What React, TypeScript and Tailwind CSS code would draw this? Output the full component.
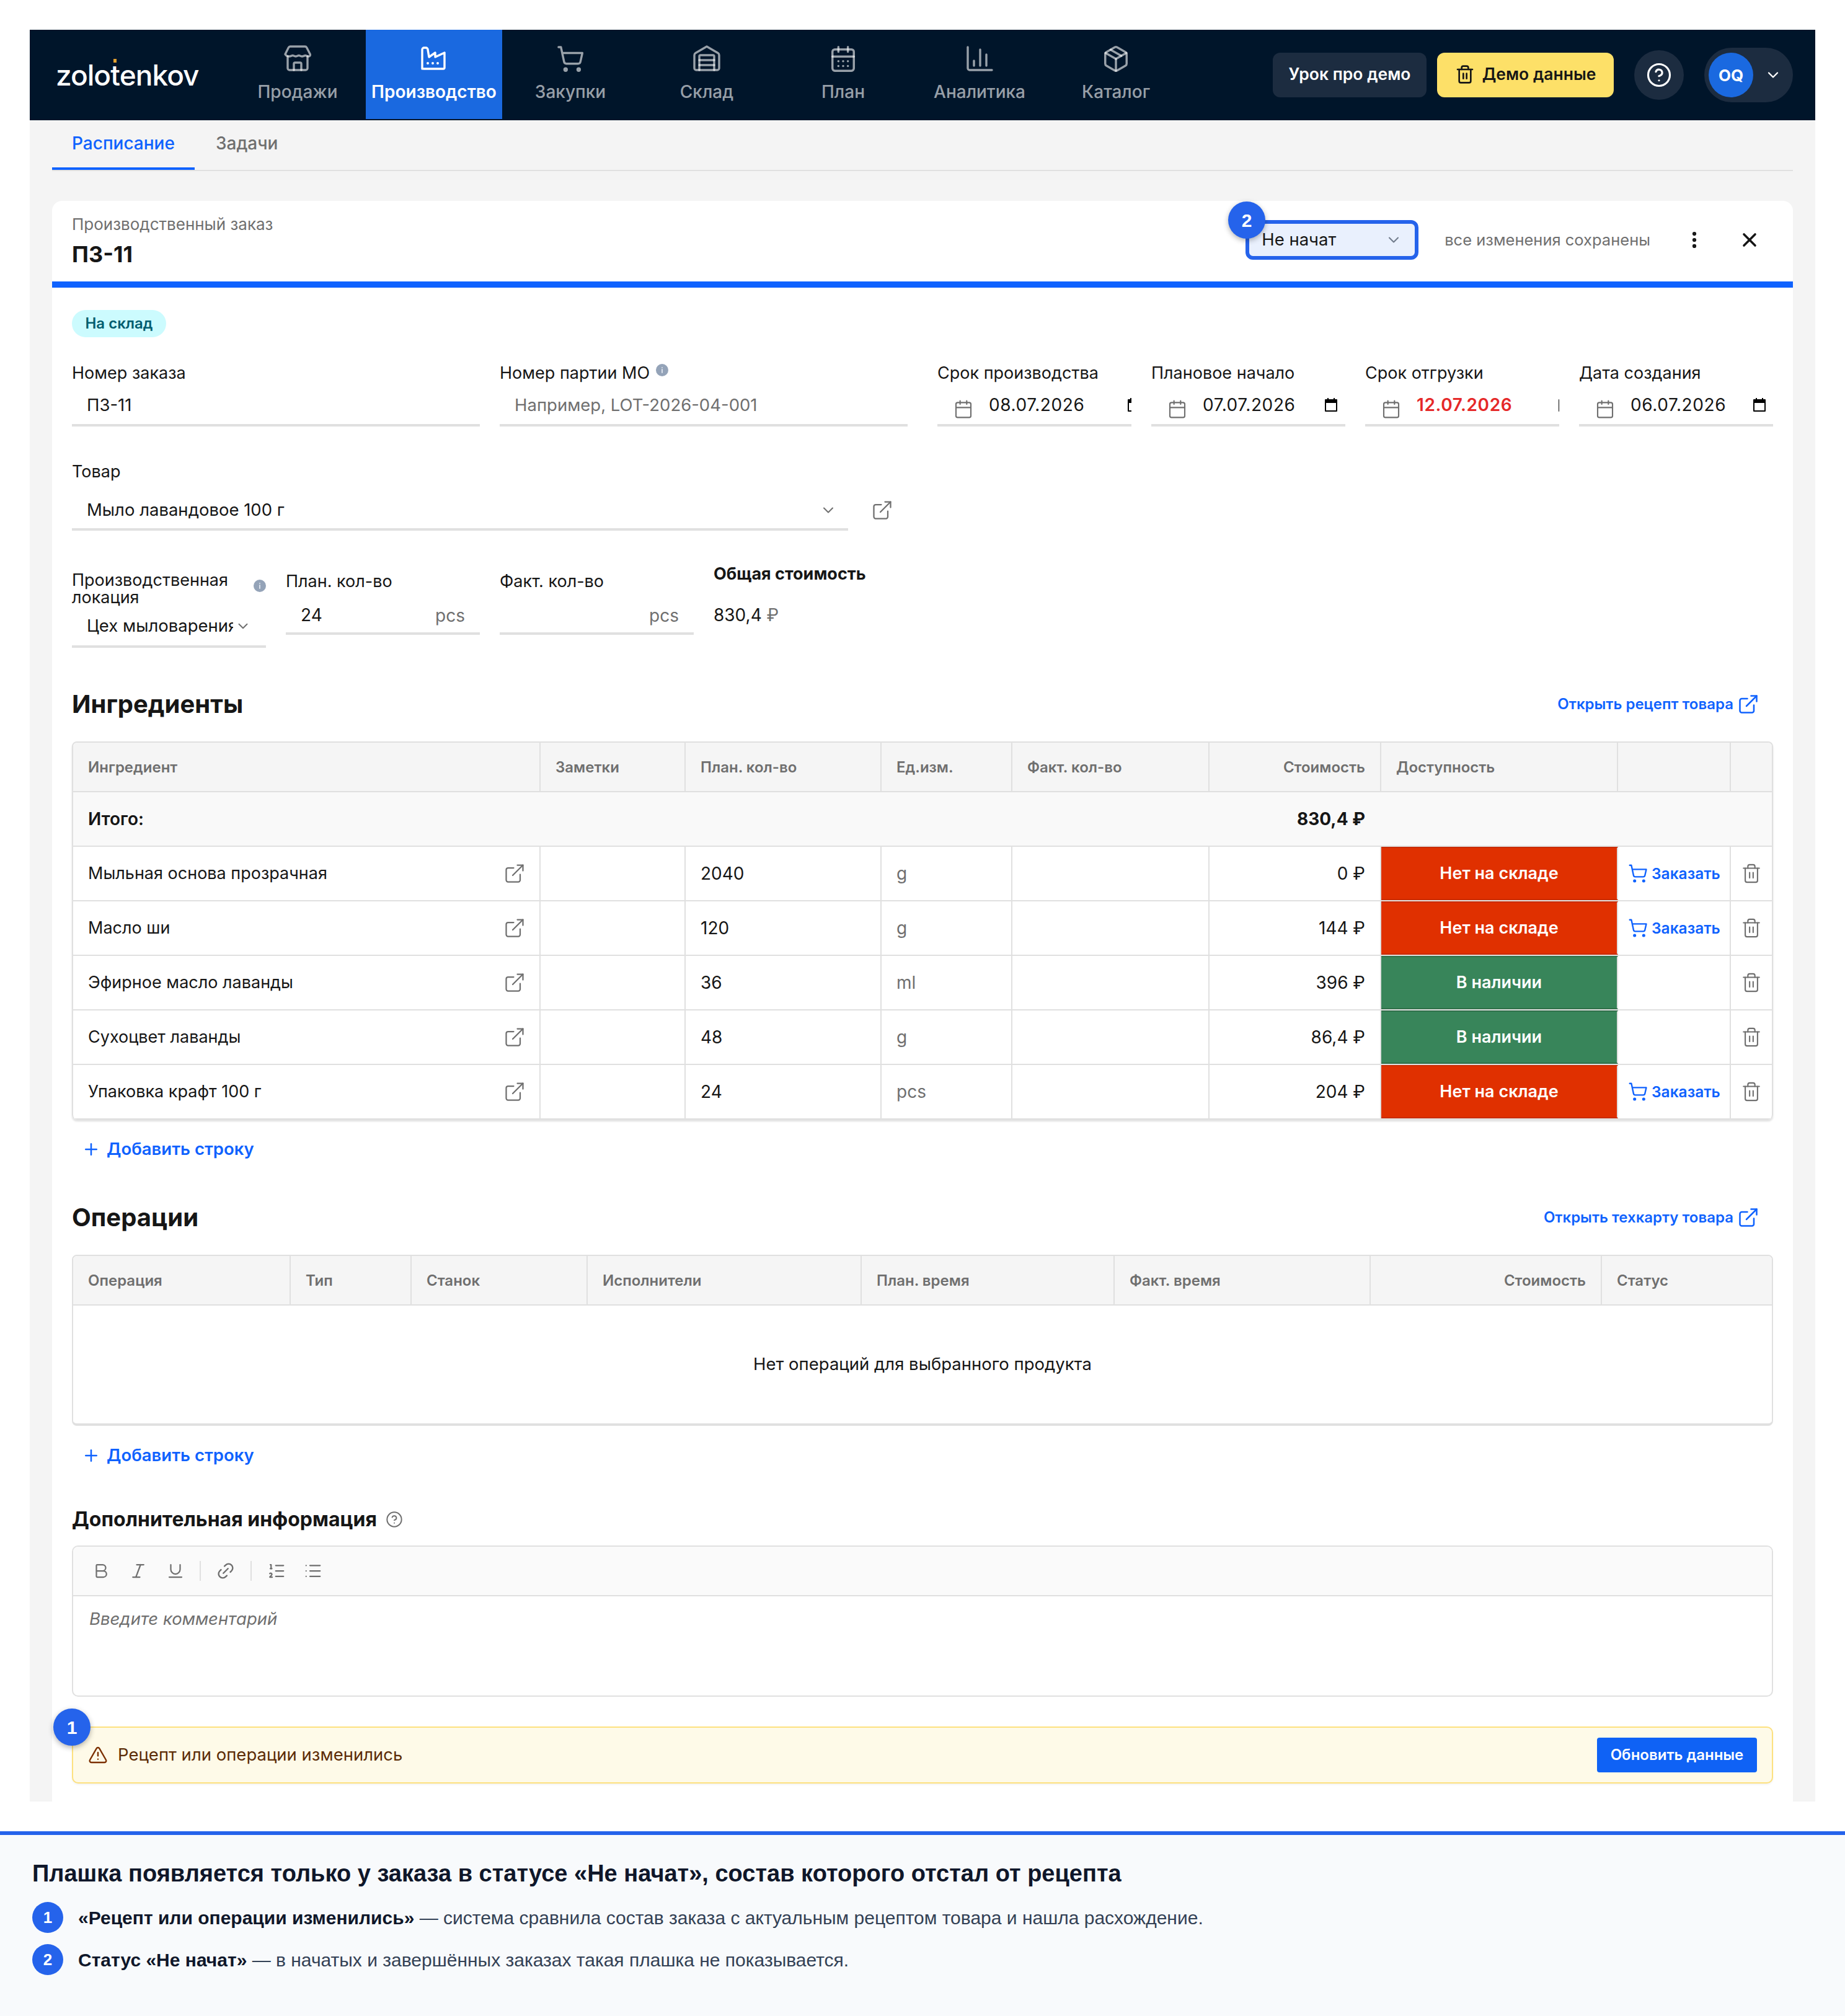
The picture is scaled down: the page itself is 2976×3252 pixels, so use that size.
import {
  Bold,
  CalendarDays,
  Calendar,
  ChevronDown,
  CircleHelp,
  EllipsisVertical,
  ExternalLink,
  Italic,
  Link2,
  List,
  ListOrdered,
  Package,
  Plus,
  ShoppingCart,
  Trash2,
  TriangleAlert,
  Underline,
  X,
} from "lucide-react";

const StoreIcon = () => (
  <svg viewBox="0 0 44 44" className="w-[44px] h-[44px]" fill="none" stroke="currentColor" strokeWidth="3.4" strokeLinejoin="round" strokeLinecap="round">
    <path d="M10 2h24a3 3 0 0 1 2.6 1.5L42 14c1 2.5-.5 4-2.5 4-2.500 0-3.500-1.500-5-1.500S31.500 18 29 18s-3.500-1.500-5-1.500S21.500 18 19 18s-3.500-1.500-5-1.500S11 18 8.500 18 4 18 2 14.500L7.500 3.500A3 3 0 0 1 10 2z" />
    <path d="M6 18v19a3 3 0 0 0 3 3h26a3 3 0 0 0 3-3V18" />
    <path d="M16 40V30a2 2 0 0 1 2-2h8a2 2 0 0 1 2 2v10" />
  </svg>
);

const FactoryIcon = () => (
  <svg viewBox="0 0 44 44" className="w-[44px] h-[44px]" fill="none" stroke="currentColor" strokeWidth="3.4" strokeLinejoin="round" strokeLinecap="round">
    <path d="M3 38V7a3 3 0 0 1 3-3h3a3 3 0 0 1 3 3l2 12 10-7v7l15-7v24a2 2 0 0 1-2 2H5a2 2 0 0 1-2-2z" />
    <path d="M12 29h.01M20 29h.01M28 29h.01" strokeWidth="4" />
  </svg>
);

const WarehouseIcon = () => (
  <svg viewBox="0 0 44 44" className="w-[44px] h-[44px]" fill="none" stroke="currentColor" strokeWidth="3.400" strokeLinejoin="round" strokeLinecap="round">
    <path d="M2 37V16a4 4 0 0 1 2-3.500L22 2l18 10.500a4 4 0 0 1 2 3.500v21a3 3 0 0 1-3 3H5a3 3 0 0 1-3-3z" />
    <path d="M10 40V18a2 2 0 0 1 2-2h20a2 2 0 0 1 2 2v22" />
    <path d="M10 24h24M10 32h24" />
  </svg>
);

const ChartIcon = () => (
  <svg viewBox="0 0 44 44" className="w-[44px] h-[44px]" fill="none" stroke="currentColor" strokeWidth="3.400" strokeLinejoin="round" strokeLinecap="round">
    <path d="M3 3v34a3 3 0 0 0 3 3h36" />
    <path d="M13 25v8M23 7v26M33 15v18" />
  </svg>
);

const navItems = [
  { label: "Продажи", icon: <StoreIcon /> },
  { label: "Производство", icon: <FactoryIcon />, active: true },
  { label: "Закупки", icon: <ShoppingCart className="w-[46px] h-[46px]" strokeWidth={1.8} /> },
  { label: "Склад", icon: <WarehouseIcon /> },
  { label: "План", icon: <CalendarDays className="w-[46px] h-[46px]" strokeWidth={1.8} /> },
  { label: "Аналитика", icon: <ChartIcon /> },
  { label: "Каталог", icon: <Package className="w-[46px] h-[46px]" strokeWidth={1.8} /> },
];

const Badge = ({ n, className }: { n: number; className?: string }) => (
  <span className={`flex items-center justify-center rounded-full bg-[#2563eb] text-white font-bold font-['Liberation_Sans',sans-serif] ${className}`}>{n}</span>
);

const InfoDot = ({ className }: { className?: string }) => (
  <svg viewBox="0 0 20 20" className={`w-[20px] h-[20px] ${className}`}>
    <circle cx="10" cy="10" r="10" fill="#94a3b8" />
    <path d="M10 9v5M10 6h.01" stroke="#dbe2ec" strokeWidth="2" strokeLinecap="round" />
  </svg>
);

const PickerIcon = () => (
  <svg viewBox="0 0 24 24" className="w-[24px] h-[24px] shrink-0">
    <path d="M3 3h3V1h2v2h8V1h2v2h3a1 1 0 0 1 1 1v18a1 1 0 0 1-1 1H3a1 1 0 0 1-1-1V4a1 1 0 0 1 1-1zm1 6v12h16V9z" fill="#000" />
  </svg>
);

const Field = ({ label, value, placeholder, info, className }: { label: string; value?: string; placeholder?: string; info?: boolean; className: string }) => (
  <div className={className}>
    <div className="h-[36px] flex items-center text-[27px] leading-[36px] text-[#161616]">
      {label}
      {info && <InfoDot className="ml-[10px] -mt-[10px]" />}
    </div>
    <div className={`mt-[1px] h-[67px] border-b-4 border-[#e0e0e0] pl-[24px] pt-[2px] flex items-center text-[27.500px] ${placeholder ? "text-[#6f6f6f]" : "text-[#161616]"}`}>
      {value || placeholder}
    </div>
  </div>
);

const dateFields = [
  { label: "Срок производства", value: "08.07.2026", gap: "w-[222px]", color: "text-[#161616]" },
  { label: "Плановое начало", value: "07.07.2026", gap: "w-[195px]", color: "text-[#161616]" },
  { label: "Срок отгрузки", value: "12.07.2026", gap: "w-[227px]", color: "text-[#e52828] font-semibold" },
  { label: "Дата создания", value: "06.07.2026", gap: "w-[196px]", color: "text-[#161616]" },
];

const DateField = ({ label, value, gap, color }: { label: string; value: string; gap: string; color: string }) => (
  <div className="w-[313px]">
    <div className="h-[36px] flex items-center text-[27px] leading-[36px] text-[#161616]">{label}</div>
    <div className="mt-[1px] h-[67px] border-b-4 border-[#e0e0e0] pl-[26px] flex items-center overflow-hidden">
      <Calendar className="w-[32px] h-[32px] shrink-0 text-[#6f6f6f] mt-[14px]" strokeWidth={1.6} />
      <span className={`ml-[25px] ${gap} shrink-0 text-[28px] tracking-[0.6px] ${color}`}>{value}</span>
      <PickerIcon />
    </div>
  </div>
);

const Header = () => (
  <header className="h-[146px] bg-[#00152a] flex items-start">
    <div className="w-[322px] pl-[42px] h-[146px] flex items-center text-white text-[46px] font-medium tracking-[-1px]">
      <span>zolo</span>
      <span className="relative">
        t<span className="absolute left-[5px] top-[8px] w-[5px] h-[6px] bg-[#e0a030]" />
      </span>
      <span>enkov</span>
    </div>
    {navItems.map((item) => (
      <div
        key={item.label}
        className={`w-[220px] h-[144px] pt-[24px] flex flex-col items-center ${item.active ? "bg-[#1a69e0] text-white font-semibold" : "text-white/60 font-medium"}`}
      >
        <div className="h-[46px] flex items-center justify-center">{item.icon}</div>
        <div className="mt-[12px] text-[28px] leading-[36px]">{item.label}</div>
      </div>
    ))}
    <div className="ml-auto h-[146px] pr-[36px] flex items-center">
      <div className="h-[72px] w-[248px] rounded-[12px] bg-[#1c2c40] text-white text-[26.500px] font-semibold pb-[2px] flex items-center justify-center">Урок про демо</div>
      <div className="ml-[17px] h-[72px] w-[285px] rounded-[12px] bg-[#fde068] text-[#161616] text-[26.500px] font-semibold pb-[2px] flex items-center justify-center gap-[12px]">
        <Trash2 className="w-[32px] h-[32px]" strokeWidth={2} />
        Демо данные
      </div>
      <div className="ml-[33px] w-[80px] h-[80px] rounded-full bg-[#1c2c40] flex items-center justify-center text-white">
        <CircleHelp className="w-[42px] h-[42px]" strokeWidth={1.8} />
      </div>
      <div className="ml-[33px] w-[143px] h-[88px] rounded-full bg-[#1c2c40] pl-[7px] flex items-center">
        <div className="w-[72px] h-[72px] rounded-full bg-[#1a69e0] text-white text-[26px] font-bold flex items-center justify-center">OQ</div>
        <ChevronDown className="ml-[18px] w-[28px] h-[28px] text-white" strokeWidth={2} />
      </div>
    </div>
  </header>
);

const ingCols = "grid grid-cols-[754px_234px_316px_211px_318px_277px_382px_182px_1fr]";
const cell = "border-r-2 border-[#e0e0e0] flex items-center";

const rows = [
  { name: "Мыльная основа прозрачная", qty: "2040", unit: "g", cost: "0 ₽", ok: false },
  { name: "Масло ши", qty: "120", unit: "g", cost: "144 ₽", ok: false },
  { name: "Эфирное масло лаванды", qty: "36", unit: "ml", cost: "396 ₽", ok: true },
  { name: "Сухоцвет лаванды", qty: "48", unit: "g", cost: "86,4 ₽", ok: true },
  { name: "Упаковка крафт 100 г", qty: "24", unit: "pcs", cost: "204 ₽", ok: false },
];

const SectionHead = ({ title, link }: { title: string; link: string }) => (
  <div className="h-[48px] flex items-center justify-between">
    <h2 className="text-[40px] font-bold text-[#161616]">{title}</h2>
    <div className="mr-[22px] flex items-center gap-[6px] text-[24px] font-semibold text-[#0f62fe]">
      {link}
      <ExternalLink className="w-[36px] h-[36px]" strokeWidth={1.7} />
    </div>
  </div>
);

const AddRow = ({ className }: { className: string }) => (
  <div className={`h-[48px] pl-[16px] flex items-center gap-[10px] text-[27.500px] font-semibold text-[#0f62fe] ${className}`}>
    <Plus className="w-[30px] h-[30px]" strokeWidth={2} />
    Добавить строку
  </div>
);

const IngredientsTable = () => (
  <div className="mt-[36px] rounded-[8px] border-t-2 border-x-2 border-[#e0e0e0] shadow-[0_3px_3px_rgba(0,0,0,0.12)] overflow-hidden">
    <div className={`${ingCols} h-[80px] bg-[#f5f5f5] border-b-2 border-[#e0e0e0] text-[24px] font-semibold text-[#6f6f6f]`}>
      <div className={`${cell} pl-[24px] pt-[2px]`}>Ингредиент</div>
      <div className={`${cell} pl-[24px] pt-[2px]`}>Заметки</div>
      <div className={`${cell} pl-[24px] pt-[2px]`}>План. кол-во</div>
      <div className={`${cell} pl-[24px] pt-[2px]`}>Ед.изм.</div>
      <div className={`${cell} pl-[24px] pt-[2px]`}>Факт. кол-во</div>
      <div className={`${cell} justify-end pr-[24px] pt-[2px]`}>Стоимость</div>
      <div className={`${cell} pl-[24px] pt-[2px]`}>Доступность</div>
      <div className={cell} />
      <div />
    </div>
    <div className="h-[88px] bg-[#f9f9f9] border-b-2 border-[#e0e0e0] flex items-center justify-between text-[28px] font-semibold text-[#161616]">
      <span className="pl-[24px]">Итого:</span>
      <span className="mr-[656px] font-bold">830,4 ₽</span>
    </div>
    {rows.map((r) => (
      <div key={r.name} className={`${ingCols} h-[88px] border-b-2 border-[#e0e0e0] text-[28px] text-[#161616]`}>
        <div className={`${cell} pl-[24px] pr-[22px] justify-between`}>
          <span className="text-[27px]">{r.name}</span>
          <ExternalLink className="w-[36px] h-[36px] text-[#6f6f6f]" strokeWidth={1.5} />
        </div>
        <div className={cell} />
        <div className={`${cell} pl-[24px]`}>{r.qty}</div>
        <div className={`${cell} pl-[24px] text-[#6f6f6f]`}>{r.unit}</div>
        <div className={cell} />
        <div className={`${cell} justify-end pr-[24px]`}>{r.cost}</div>
        <div className={`${cell} justify-center text-white font-semibold text-[27px] border-y-2 ${r.ok ? "bg-[#38855a] border-y-[#2f7049]" : "bg-[#e03000] border-y-[#c92b00]"}`}>
          {r.ok ? "В наличии" : "Нет на складе"}
        </div>
        <div className={`${cell} pl-[16px] gap-[6px] text-[24.500px] font-semibold text-[#0f62fe]`}>
          {!r.ok && (
            <>
              <ShoppingCart className="w-[32px] h-[32px]" strokeWidth={1.8} />
              Заказать
            </>
          )}
        </div>
        <div className="flex items-center justify-center">
          <Trash2 className="w-[34px] h-[34px] text-[#6f6f6f]" strokeWidth={1.5} />
        </div>
      </div>
    ))}
  </div>
);

const OperationsTable = () => (
  <div className="mt-[36px] rounded-[8px] border-t-2 border-x-2 border-b-4 border-[#e0e0e0] overflow-hidden">
    <div className="grid grid-cols-[351px_195px_284px_442px_408px_413px_373px_1fr] h-[80px] bg-[#f5f5f5] border-b-2 border-[#e0e0e0] text-[24px] font-semibold text-[#6f6f6f]">
      <div className={`${cell} pl-[24px] pt-[2px]`}>Операция</div>
      <div className={`${cell} pl-[24px] pt-[2px]`}>Тип</div>
      <div className={`${cell} pl-[24px] pt-[2px]`}>Станок</div>
      <div className={`${cell} pl-[24px] pt-[2px]`}>Исполнители</div>
      <div className={`${cell} pl-[24px] pt-[2px]`}>План. время</div>
      <div className={`${cell} pl-[24px] pt-[2px]`}>Факт. время</div>
      <div className={`${cell} justify-end pr-[24px] pt-[2px]`}>Стоимость</div>
      <div className="flex items-center pl-[24px] pt-[2px]">Статус</div>
    </div>
    <div className="h-[190px] flex items-center justify-center text-[27.500px] text-[#161616]">Нет операций для выбранного продукта</div>
  </div>
);

const Editor = () => (
  <div className="mt-[18px] h-[244px] rounded-[10px] border-2 border-[#e0e0e0] overflow-hidden">
    <div className="h-[80px] bg-[#fafafa] border-b-2 border-[#e0e0e0] pl-[30px] flex items-center text-[#6f6f6f]">
      <Bold className="w-[30px] h-[30px]" strokeWidth={1.8} />
      <Italic className="ml-[30px] w-[30px] h-[30px]" strokeWidth={1.8} />
      <Underline className="ml-[30px] w-[30px] h-[30px]" strokeWidth={1.8} />
      <div className="ml-[24px] w-[2px] h-[32px] bg-[#e0e0e0]" />
      <Link2 className="ml-[24px] w-[32px] h-[32px] -rotate-45" strokeWidth={1.8} />
      <div className="ml-[24px] w-[2px] h-[32px] bg-[#e0e0e0]" />
      <ListOrdered className="ml-[25px] w-[30px] h-[30px]" strokeWidth={1.8} />
      <List className="ml-[29px] w-[30px] h-[30px]" strokeWidth={1.8} />
    </div>
    <div className="pl-[26px] pt-[16px] text-[27.500px] leading-[40px] italic text-[#6f6f6f]">Введите комментарий</div>
  </div>
);

const Banner = () => (
  <div className="relative mt-[48px] h-[92px] rounded-[10px] border-2 border-[#fde17f] bg-[#fefae8] pl-[24px] pr-[24px] flex items-center shadow-[0_2px_3px_rgba(0,0,0,0.05)]">
    <Badge n={1} className="absolute -left-[32px] -top-[31px] w-[60px] h-[60px] text-[30px] shadow-[0_3px_8px_rgba(0,0,0,0.3)]" />
    <TriangleAlert className="w-[32px] h-[32px] text-[#7c3000]" strokeWidth={1.8} />
    <span className="ml-[16px] text-[27.500px] text-[#5c2c06]">Рецепт или операции изменились</span>
    <div className="ml-auto w-[258px] h-[56px] rounded-[4px] bg-[#0f62f5] text-white text-[24px] font-semibold flex items-center justify-center">Обновить данные</div>
  </div>
);

const Legend = ({ n, strong, text }: { n: number; strong: string; text: string }) => (
  <div className="flex items-center h-[50px] text-[30px] text-[#334155]">
    <Badge n={n} className="w-[50px] h-[50px] text-[26px] shrink-0" />
    <div className="ml-[24px]">
      <b className="font-bold text-[#0f172a]">{strong}</b> {text}
    </div>
  </div>
);

export default function App() {
  return (
    <div className="w-[2976px] h-[3252px] bg-white font-['Inter',sans-serif] overflow-hidden">
      <div className="pt-[48px] px-[48px]">
        <div className="h-[2858px] bg-[#f4f4f4]">
          <Header />
          <div className="px-[36px]">
            <div className="h-[82px] border-b-2 border-[#e0e0e0] flex items-end text-[28px] font-medium">
              <div className="h-[80px] px-[32px] border-b-4 border-[#0f62fe] text-[#0f62fe] flex items-center pb-[2px]">Расписание</div>
              <div className="h-[80px] px-[34px] text-[#6f6f6f] flex items-center pb-[6px]">Задачи</div>
            </div>

            <div className="mt-[48px] h-[2582px] bg-white rounded-t-[16px]">
              <div className="h-[140px] border-b-[10px] border-[#0f62fe] pl-[32px] pr-[52px] flex items-center">
                <div>
                  <div className="text-[26px] leading-[32px] text-[#6f6f6f]">Производственный заказ</div>
                  <div className="mt-[10px] text-[36px] leading-[44px] font-bold text-[#161616]">ПЗ-11</div>
                </div>
                <div className="ml-auto mt-[-4px] flex items-center">
                  <div className="relative w-[279px] h-[64px] rounded-[12px] border-[6px] border-[#2563eb] bg-[#e9f0fd] pl-[20px] pr-[20px] flex items-center justify-between text-[27.500px] text-[#161616]">
                    <Badge n={2} className="absolute -left-[34px] -top-[36px] w-[60px] h-[60px] text-[30px] shadow-[0_3px_8px_rgba(0,0,0,0.3)]" />
                    Не начат
                    <ChevronDown className="w-[28px] h-[28px] text-[#6f7a8a]" strokeWidth={1.8} />
                  </div>
                  <span className="ml-[42px] text-[25.500px] text-[#6f6f6f]">все изменения сохранены</span>
                  <EllipsisVertical className="ml-[54px] w-[34px] h-[34px] text-[#161616]" strokeWidth={2.4} />
                  <X className="ml-[54px] w-[36px] h-[36px] text-[#161616]" strokeWidth={2.4} />
                </div>
              </div>

              <div className="px-[32px]">
                <div className="pt-[36px]">
                  <span className="inline-flex h-[44px] w-[152px] items-center justify-center rounded-full bg-[#ccfbfe] text-[#005d6e] text-[24px] font-semibold">На склад</span>
                </div>

                <div className="mt-[40px] flex">
                  <Field className="w-[658px]" label="Номер заказа" value="ПЗ-11" />
                  <Field className="ml-[32px] w-[658px]" label="Номер партии МО" placeholder="Например, LOT-2026-04-001" info />
                  <div className="ml-[48px] flex gap-[32px]">
                    {dateFields.map((d) => (
                      <DateField key={d.label} {...d} />
                    ))}
                  </div>
                </div>

                <div className="mt-[55px] flex">
                  <div className="w-[1252px]">
                    <div className="h-[36px] flex items-center text-[27px] text-[#161616]">Товар</div>
                    <div className="mt-[1px] h-[76px] border-b-4 border-[#e0e0e0] pl-[24px] pr-[18px] pt-[14px] flex items-center justify-between text-[27.500px] text-[#161616]">
                      Мыло лавандовое 100 г
                      <ChevronDown className="w-[28px] h-[28px] text-[#6f6f6f]" strokeWidth={1.8} />
                    </div>
                  </div>
                  <ExternalLink className="ml-[37px] mt-[62px] w-[36px] h-[36px] text-[#6f6f6f]" strokeWidth={1.5} />
                </div>

                <div className="mt-[52px] flex items-start gap-[32px]">
                  <div className="w-[313px] pt-[14px]">
                    <div className="flex items-center justify-between text-[27px] leading-[28px] text-[#161616]">
                      <span>
                        Производственная
                        <br />
                        локация
                      </span>
                      <InfoDot className="-mt-[10px]" />
                    </div>
                    <div className="h-[67px] border-b-4 border-[#e0e0e0] pl-[24px] pr-[24px] flex items-center justify-between text-[27.500px] text-[#161616]">
                      <span className="w-[236px] overflow-hidden whitespace-nowrap">Цех мыловарения</span>
                      <ChevronDown className="w-[26px] h-[26px] text-[#6f6f6f] shrink-0" strokeWidth={1.8} />
                    </div>
                  </div>
                  {[
                    { label: "План. кол-во", value: "24" },
                    { label: "Факт. кол-во", value: "" },
                  ].map((f) => (
                    <div key={f.label} className="w-[313px] pt-[12px]">
                      <div className="h-[36px] flex items-center text-[27px] text-[#161616]">{f.label}</div>
                      <div className="mt-[4px] h-[64px] border-b-4 border-[#e0e0e0] pl-[24px] pr-[24px] pt-[4px] flex items-center justify-between text-[28px] text-[#161616]">
                        <span>{f.value}</span>
                        <span className="text-[#6f6f6f] text-[28px] mt-[2px]">pcs</span>
                      </div>
                    </div>
                  ))}
                  <div>
                    <div className="h-[36px] flex items-center text-[27px] font-bold text-[#161616]">Общая стоимость</div>
                    <div className="mt-[30px] h-[36px] flex items-center text-[28px] text-[#161616]">
                      830,4&nbsp;<span className="text-[#6f6f6f]">₽</span>
                    </div>
                  </div>
                </div>

                <div className="mt-[67px]">
                  <SectionHead title="Ингредиенты" link="Открыть рецепт товара" />
                </div>
                <IngredientsTable />
                <AddRow className="mt-[24px]" />

                <div className="mt-[62px]">
                  <SectionHead title="Операции" link="Открыть техкарту товара" />
                </div>
                <OperationsTable />
                <AddRow className="mt-[24px]" />

                <div className="mt-[55px] h-[48px] flex items-center gap-[14px]">
                  <h3 className="text-[32px] font-bold text-[#161616]">Дополнительная информация</h3>
                  <CircleHelp className="w-[28px] h-[28px] text-[#6f6f6f]" strokeWidth={1.7} />
                </div>
                <Editor />
                <Banner />
              </div>
            </div>
          </div>
        </div>
      </div>

      <footer className="mt-[48px] h-[298px] border-t-[6px] border-[#2563eb] bg-[#f8fafc] px-[52px] pt-[40px] font-['Liberation_Sans',sans-serif]">
        <div className="text-[38px] leading-[44px] font-bold text-[#0f172a]">Плашка появляется только у заказа в статусе «Не начат», состав которого отстал от рецепта</div>
        <div className="mt-[24px] flex flex-col gap-[18px]">
          <Legend n={1} strong="«Рецепт или операции изменились»" text="— система сравнила состав заказа с актуальным рецептом товара и нашла расхождение." />
          <Legend n={2} strong="Статус «Не начат»" text="— в начатых и завершённых заказах такая плашка не показывается." />
        </div>
      </footer>
    </div>
  );
}
